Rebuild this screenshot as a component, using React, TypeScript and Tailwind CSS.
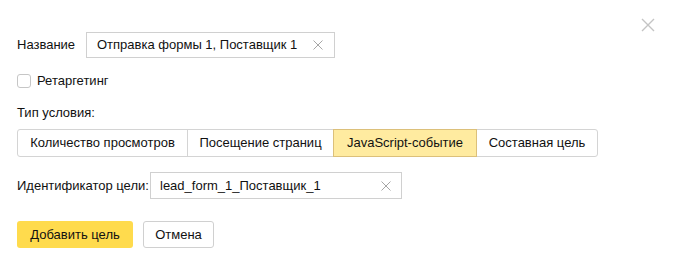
import React, { useState } from 'react';

const CONDITIONS = [
  { label: 'Количество просмотров', w: 'w-[171px]' },
  { label: 'Посещение страниц', w: 'w-[147px]' },
  { label: 'JavaScript-событие', w: 'w-[144px]' },
  { label: 'Составная цель', w: 'w-[122px]' },
];

function ClearIcon() {
  return (
    <svg width="10" height="10" viewBox="0 0 10 10" className="shrink-0">
      <path d="M0.5 0.5 L9.5 9.5 M9.5 0.5 L0.5 9.5" stroke="#a6a6a6" strokeWidth="1" />
    </svg>
  );
}

export default function App() {
  const [active, setActive] = useState(2);
  const [retarget, setRetarget] = useState(false);

  return (
    <div className="relative w-[675px] h-[267px] bg-white text-[13px] text-[#111] font-['Liberation_Sans',Arial,sans-serif] pl-[17px] pt-[32px]">
      <button className="absolute left-[641px] top-[18px] w-[14px] h-[14px]">
        <svg width="14" height="14" viewBox="0 0 14 14">
          <path d="M1 1 L13 13 M13 1 L1 13" stroke="#c4c4c4" strokeWidth="1.4" />
        </svg>
      </button>

      <div className="flex items-center h-[26px]">
        <span className="w-[69px]">Название</span>
        <div className="flex items-center w-[249px] h-[26px] border border-[#d0d0d0] pl-[10px] pr-[11px]">
          <span className="flex-1 truncate">Отправка формы 1, Поставщик 1</span>
          <ClearIcon />
        </div>
      </div>

      <label className="flex items-center h-[16px] mt-[15px] cursor-pointer" onClick={() => setRetarget(!retarget)}>
        <span className="w-[14px] h-[14px] rounded-[3px] border border-[#c6c6c6] bg-white" />
        <span className="ml-[6px]">Ретаргетинг</span>
      </label>

      <div className="h-[16px] mt-[16px] leading-[16px]">Тип условия:</div>

      <div className="flex mt-[8px] h-[28px]">
        {CONDITIONS.map((c, i) => {
          const isActive = i === active;
          return (
            <button
              key={c.label}
              onClick={() => setActive(i)}
              className={`h-[28px] ${c.w} border whitespace-nowrap ${i > 0 ? '-ml-px' : ''} ${
                i === 0 ? 'rounded-l-[3px]' : ''
              } ${i === CONDITIONS.length - 1 ? 'rounded-r-[3px]' : ''} ${
                isActive ? 'bg-[#ffeba0] border-[#dcc07a] relative z-10' : 'bg-white border-[#d4d4d4]'
              }`}
            >
              {c.label}
            </button>
          );
        })}
      </div>

      <div className="flex items-center h-[27px] mt-[15px]">
        <span className="w-[133px]">Идентификатор цели:</span>
        <div className="flex items-center w-[252px] h-[27px] border border-[#d0d0d0] pl-[9px] pr-[10px]">
          <span className="flex-1 truncate">lead_form_1_Поставщик_1</span>
          <ClearIcon />
        </div>
      </div>

      <div className="flex gap-[10px] mt-[22px]">
        <button className="h-[27px] w-[116px] rounded-[3px] bg-[#ffdb4d]">Добавить цель</button>
        <button className="h-[27px] w-[71px] rounded-[3px] border border-[#d0d0d0] bg-white">Отмена</button>
      </div>
    </div>
  );
}
